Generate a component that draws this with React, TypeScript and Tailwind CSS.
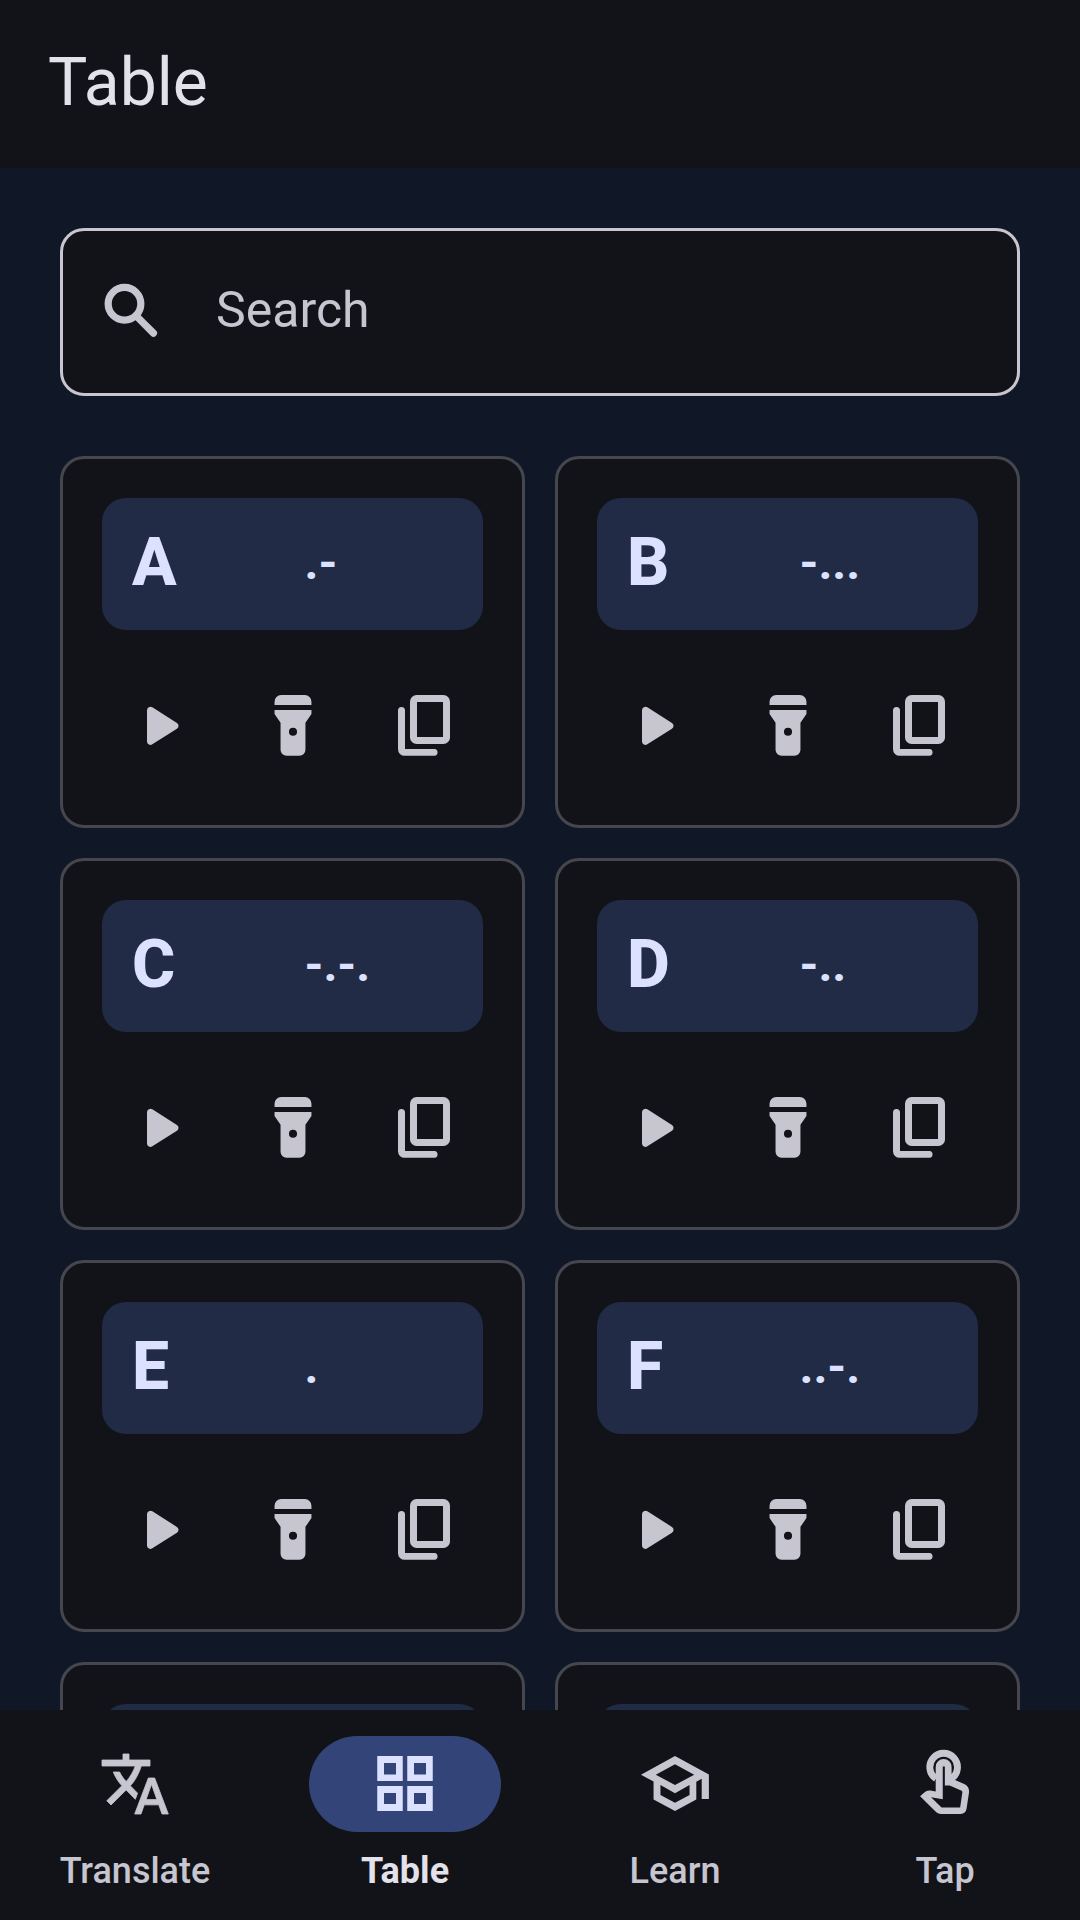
import { useState } from "react";
import type { ReactNode } from "react";

type IconProps = { className?: string };

function Icon({ children, className = "size-[72px]" }: IconProps & { children: ReactNode }) {
  return (
    <svg viewBox="0 0 24 24" fill="currentColor" aria-hidden="true" className={className}>
      {children}
    </svg>
  );
}

function SearchIcon() {
  return (
    <Icon className="size-[72px] shrink-0">
      <g fill="none" stroke="currentColor" strokeWidth="2.4">
        <circle cx="9.5" cy="9.25" r="5.45" />
        <path d="M14.1 14l5.05 5.05" strokeLinecap="round" />
      </g>
    </Icon>
  );
}

function PlayIcon() {
  return (
    <Icon>
      <path d="M7 6.75v10.4a1.15 1.15 0 0 0 1.78.96l8.2-5.2a1.15 1.15 0 0 0 0-1.94l-8.2-5.2A1.15 1.15 0 0 0 7 6.75Z" />
    </Icon>
  );
}

function FlashlightIcon() {
  return (
    <Icon>
      <path d="M5.85 5V3.9a2.2 2.2 0 0 1 2.2-2.2h7.9a2.2 2.2 0 0 1 2.2 2.2V5Z" />
      <path
        fillRule="evenodd"
        d="M5.85 6.67h12.3V8l-2 2.95v8.95a2 2 0 0 1-2 2h-4.3a2 2 0 0 1-2-2v-8.95l-2-2.95ZM12 12.55a1.35 1.35 0 1 0 0 2.7 1.35 1.35 0 0 0 0-2.7Z"
      />
    </Icon>
  );
}

function CopyIcon() {
  return (
    <Icon>
      <path
        fillRule="evenodd"
        d="M9.87 1.7h8.93a2.2 2.2 0 0 1 2.2 2.2v11.9a2.2 2.2 0 0 1-2.2 2.2H9.87a2.2 2.2 0 0 1-2.2-2.2V3.9a2.2 2.2 0 0 1 2.2-2.2ZM10 4v11.7h8.67V4Z"
      />
      <path d="M4.83 5.67A1.17 1.17 0 0 1 6 6.84v12.83h9.85a1.15 1.15 0 0 1 0 2.28H5.87a2.2 2.2 0 0 1-2.2-2.2V6.84a1.17 1.17 0 0 1 1.16-1.17Z" />
    </Icon>
  );
}

function TranslateIcon() {
  return (
    <svg
      viewBox="0 -960 960 960"
      fill="currentColor"
      stroke="currentColor"
      strokeWidth="11"
      aria-hidden="true"
      className="size-[72px]"
    >
      <path d="m476-80 182-480h84L924-80h-84l-43-122H603L560-80h-84ZM160-200l-56-56 202-202q-35-35-63.5-80T190-640h84q20 39 40 68t48 58q33-33 68.5-92.5T484-720H40v-80h280v-80h80v80h280v80H564q-21 72-63 148t-83 116l96 98-30 82-122-125-202 201Zm468-72h144l-72-204-72 204Z" />
    </svg>
  );
}

function GridIcon() {
  return (
    <Icon>
      <path
        fillRule="evenodd"
        d="M2.75 2.7h8.5V11h-8.5ZM5 5v3.8h4V5ZM12.75 2.7h8.5V11h-8.5ZM15 5v3.8h4V5ZM2.75 12.7h8.5V21h-8.5ZM5 15v3.7h4V15ZM12.75 12.7h8.5V21h-8.5ZM15 15v3.7h4V15Z"
      />
    </Icon>
  );
}

function SchoolIcon() {
  return (
    <Icon>
      <path
        fillRule="evenodd"
        d="M12 2.7 23.3 8.85V17h-2.4v-6.75l-1.8 1V17.2L12 21l-7.15-3.8v-6l-4.2-2.3ZM12 5.4 5.6 8.9l6.4 3.45 6.4-3.45ZM7.15 12.3v3.35L12 18.25l4.85-2.6V12.3L12 15.1Z"
      />
    </Icon>
  );
}

function TouchIcon() {
  return (
    <Icon>
      <path d="M9 10.2a4.6 4.6 0 1 1 5.1 0" fill="none" stroke="currentColor" strokeWidth="2.3" />
      <path
        fillRule="evenodd"
        d="M8.9 6.3a2.65 2.65 0 0 1 5.3 0v3.9l4.2 1.8q1.8.8 1.6 2.8l-.8 5.4q-.3 1.8-2 1.8h-6.6q-.8 0-1.5-.6L3.7 16.1l1.3-1.2q1-.9 2.2-.7l1.7.3ZM11.25 6.2v10.9l-3.9-.7 3.5 3.4h6.2l.75-5.1-.25-.45-4-1.75h-1.6V6.2Z"
      />
    </Icon>
  );
}

const letters = [
  { char: "A", code: ".-" },
  { char: "B", code: "-..." },
  { char: "C", code: "-.-." },
  { char: "D", code: "-.." },
  { char: "E", code: "." },
  { char: "F", code: "..-." },
  { char: "G", code: "--." },
  { char: "H", code: "...." },
];

const tabs = [
  { label: "Translate", icon: <TranslateIcon /> },
  { label: "Table", icon: <GridIcon /> },
  { label: "Learn", icon: <SchoolIcon /> },
  { label: "Tap", icon: <TouchIcon /> },
];

function IconButton({ label, children }: { label: string; children: ReactNode }) {
  return (
    <button
      type="button"
      aria-label={label}
      className="flex size-[120px] items-center justify-center rounded-full text-[#c6c5d0]"
    >
      {children}
    </button>
  );
}

function LetterCard({ char, code }: { char: string; code: string }) {
  return (
    <li className="flex flex-col gap-9 rounded-3xl border-3 border-[#46464f] bg-[#121318] p-[39px]">
      <div className="grid h-[132px] grid-cols-2 items-center gap-6 rounded-3xl bg-[#212b46] px-[30px] pb-0.5 text-[#dbe1ff]">
        <span className="text-[66px] leading-[84px] font-extrabold">{char}</span>
        <span className="text-5xl leading-[72px] font-bold">{code}</span>
      </div>
      <div className="flex justify-between">
        <IconButton label={`Play ${char}`}>
          <PlayIcon />
        </IconButton>
        <IconButton label={`Flash ${char}`}>
          <FlashlightIcon />
        </IconButton>
        <IconButton label={`Copy ${char}`}>
          <CopyIcon />
        </IconButton>
      </div>
    </li>
  );
}

export default function App() {
  const [active, setActive] = useState("Table");
  const [query, setQuery] = useState("");
  const visible = letters.filter((l) => l.char.includes(query.trim().toUpperCase()));

  return (
    <div className="flex h-screen flex-col bg-[#101726] font-[Roboto,sans-serif] text-[#e3e1e9]">
      <header className="flex h-[168px] shrink-0 items-center bg-[#121318] px-12 pb-0.5">
        <h1 className="text-[66px] leading-[84px]">Table</h1>
      </header>

      <main className="min-h-0 flex-1 overflow-y-auto px-[60px] pt-[60px] [scrollbar-width:none]">
        {/* Search */}
        <label className="flex h-[168px] items-center gap-12 rounded-3xl border-3 border-[#c6c5d0] bg-[#121318] px-[33px] text-[#c6c5d0]">
          <SearchIcon />
          <input
            type="text"
            aria-label="Search"
            placeholder="Search"
            value={query}
            onChange={(e) => setQuery(e.target.value)}
            className="min-w-0 flex-1 bg-transparent pb-1 text-[50px] leading-[72px] outline-none placeholder:text-[#c6c5d0]"
          />
        </label>

        {/* Letters */}
        <ul className="mt-[60px] grid grid-cols-2 gap-[30px] pb-[60px]">
          {visible.map((l) => (
            <LetterCard key={l.char} char={l.char} code={l.code} />
          ))}
        </ul>
      </main>

      <nav className="grid h-[210px] shrink-0 grid-cols-4 bg-[#121318] pt-[26px]">
        {tabs.map((tab) => {
          const selected = tab.label === active;
          return (
            <button
              key={tab.label}
              type="button"
              aria-current={selected ? "page" : undefined}
              onClick={() => setActive(tab.label)}
              className={`flex flex-col items-center gap-3 ${selected ? "text-[#e3e1e9]" : "text-[#c6c5d0]"}`}
            >
              <span
                className={`flex h-24 w-48 items-center justify-center rounded-full ${
                  selected ? "bg-[#334478] text-[#dbe1ff]" : ""
                }`}
              >
                {tab.icon}
              </span>
              <span className={`text-4xl leading-[54px] ${selected ? "font-bold" : "font-medium"}`}>
                {tab.label}
              </span>
            </button>
          );
        })}
      </nav>
    </div>
  );
}
